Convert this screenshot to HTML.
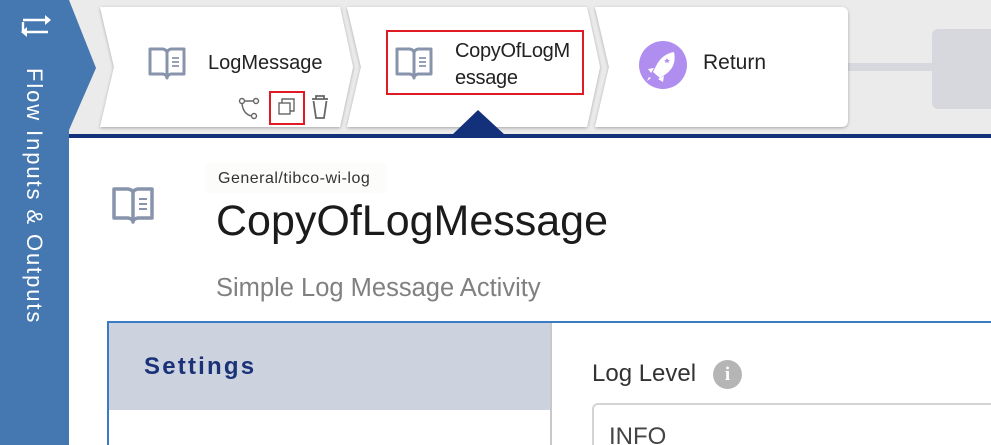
<!DOCTYPE html>
<html><head><meta charset="utf-8"><style>
*{margin:0;padding:0;box-sizing:border-box}
html,body{width:991px;height:445px;overflow:hidden}
body{background:#fff;font-family:"Liberation Sans",sans-serif;position:relative}
.abs{position:absolute}
</style></head><body>
<div class="abs" style="left:0;top:0;width:991px;height:135px;background:#ebebeb"></div>
<div class="abs" style="left:69px;top:134px;width:922px;height:4px;background:#13307a"></div>
<div class="abs" style="left:845px;top:63px;width:90px;height:8px;background:#d7d8dd"></div>
<div class="abs" style="left:932px;top:29px;width:70px;height:80px;background:#d7d8dd;border-radius:6px"></div>
<div class="abs" style="left:0;top:0;width:69px;height:445px;background:#4577b0"></div>
<svg class="abs" style="left:0;top:0" width="991" height="240">
<defs><filter id="sh" x="-5%" y="-5%" width="110%" height="120%"><feDropShadow dx="0" dy="1" stdDeviation="1.5" flood-color="#000" flood-opacity="0.3"/></filter></defs>
<polygon points="100,7 340,7 353,67 340,127 100,127 114,67" fill="#fff" filter="url(#sh)"/>
<polygon points="347,7 587,7 600,67 587,127 347,127 361,67" fill="#fff" filter="url(#sh)"/>
<path d="M595,7 H841 Q848,7 848,14 V120 Q848,127 841,127 H595 L609,67 Z" fill="#fff" filter="url(#sh)"/>
<polygon points="452,135 478,110 505,135" fill="#13307a"/>
<g fill="none" stroke="#8794ac" stroke-width="3" stroke-linejoin="round">
<path d="M150,49 H163 Q167,50 167,53 Q167,50 171,49 H184 V74 H171 Q167,75 167,78 Q167,75 163,74 H150 Z M167,53 V77"/>
<path d="M172,58 H179 M172,62 H179 M172,66 H179" stroke-width="1.8"/>
<path d="M397,49 H410 Q414,50 414,53 Q414,50 418,49 H431 V74 H418 Q414,75 414,78 Q414,75 410,74 H397 Z M414,53 V77"/>
<path d="M419,58 H426 M419,62 H426 M419,66 H426" stroke-width="1.8"/>
<path d="M114,189 H128 Q133,190 133,193 Q133,190 138,189 H152 V218 H138 Q133,219 133,222 Q133,219 128,218 H114 Z M133,193 V221" stroke-width="3.5"/>
<path d="M139,199 H147 M139,204 H147 M139,209 H147" stroke-width="2"/>
</g>
<g fill="none" stroke="#666" stroke-width="1.4">
<circle cx="242" cy="101" r="2.5"/><circle cx="256" cy="101" r="2.5"/><circle cx="254" cy="116" r="2.5"/>
<path d="M244.5,101 H253.5 M242,103.5 Q243,114 251.5,116"/>
<rect x="279" y="103" width="11" height="11"/><path d="M282,103 V99 H294 V111 H290"/>
<path d="M312,99 H328 M316,99 V96 H324 V99 M313.5,101 L316,118 H324 L326.5,101" stroke-width="1.8"/>
</g>
<rect x="270" y="92" width="34" height="32" fill="none" stroke="#e01b24" stroke-width="2"/>
<rect x="387" y="31" width="196" height="63" fill="none" stroke="#e01b24" stroke-width="2"/>
<circle cx="663" cy="65" r="24" fill="#b08ef0"/>
<path d="M674,52 Q662,54 656,66 L653,72 L660,78 L666,74 Q677,66 674,52 Z M654,68 L648,69 L651,73 Z M664,76 L663,82 L658,79 Z M651,78 L647,81 L649,77 Z" fill="#fff"/>
<path d="M667,58 l1,2 2,0 -1.6,1.3 .6,2 -2,-1.2 -2,1.2 .6,-2 -1.6,-1.3 2,0z" fill="#b08ef0"/>
<polygon points="68,0 69,0 96,68 69,130 68,130" fill="#4577b0"/>
<g fill="none" stroke="#fff" stroke-width="2.4">
<path d="M23,22 V33 M46,20 H23 M48,32 H26"/>
</g>
<polygon points="45,15 45,25 51,20" fill="#fff"/>
<polygon points="27,27 27,37 21,32" fill="#fff"/>
</svg>
<div class="abs" style="left:47px;top:68px;transform-origin:0 0;transform:rotate(90deg);color:#fff;font-size:22px;white-space:nowrap;letter-spacing:1.9px">Flow Inputs &amp; Outputs</div>
<div class="abs" style="left:208px;top:52px;font-size:20px;color:#222">LogMessage</div>
<div class="abs" style="left:455px;top:38px;font-size:20px;color:#222;line-height:27px;white-space:nowrap;letter-spacing:-0.3px">CopyOfLogM<br>essage</div>
<div class="abs" style="left:703px;top:51px;font-size:21px;color:#222">Return</div>
<div class="abs" style="left:206px;top:163px;width:180px;height:30px;background:#fcfcfa"></div>
<div class="abs" style="left:218px;top:170px;font-size:16px;color:#333;letter-spacing:0.5px">General/tibco-wi-log</div>
<div class="abs" style="left:216px;top:197px;font-size:43px;color:#1b1b1b">CopyOfLogMessage</div>
<div class="abs" style="left:216px;top:274px;font-size:25.5px;color:#808080">Simple Log Message Activity</div>
<div class="abs" style="left:107px;top:321px;width:890px;height:130px;border-top:2px solid #3b7bc6;border-left:2px solid #3b7bc6"></div>
<div class="abs" style="left:109px;top:323px;width:441px;height:87px;background:#cdd3de"></div>
<div class="abs" style="left:550px;top:323px;width:2px;height:130px;background:#c8c8c8"></div>
<div class="abs" style="left:144px;top:353px;font-size:24px;font-weight:bold;color:#1a3278;letter-spacing:2.2px">Settings</div>
<div class="abs" style="left:592px;top:360px;font-size:24px;color:#333">Log Level</div>
<div class="abs" style="left:713px;top:360px;width:29px;height:29px;border-radius:50%;background:#b5b5b5;color:#fff;font-weight:bold;font-size:19px;text-align:center;line-height:29px;font-family:'Liberation Serif',serif">i</div>
<div class="abs" style="left:592px;top:403px;width:420px;height:60px;border:2px solid #d4d4d4;border-radius:6px"></div>
<div class="abs" style="left:609px;top:423px;font-size:24px;color:#444">INFO</div>
</body></html>
